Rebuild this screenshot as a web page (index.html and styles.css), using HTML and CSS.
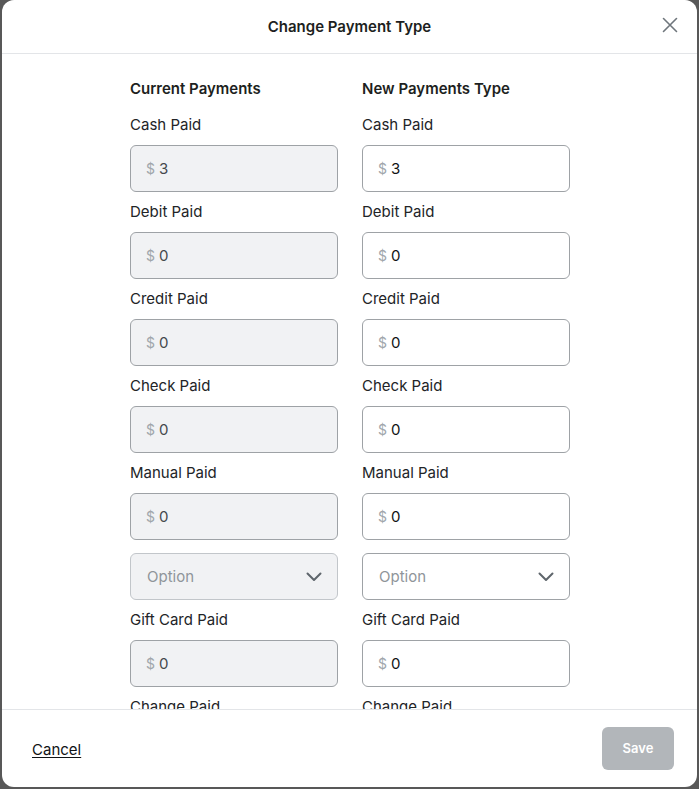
FILE: index.html
```html
<!DOCTYPE html>
<html lang="en">
<head>
<meta charset="utf-8">
<title>Change Payment Type</title>
<link rel="stylesheet" href="styles.css">
</head>
<body>
<div class="modal">
  <header class="modal-header">
    <h1 class="title">Change Payment Type</h1>
    <button class="close" aria-label="Close">
      <svg width="16" height="16" viewBox="0 0 16 16"><path d="M1.5 1.5 L14.5 14.5 M14.5 1.5 L1.5 14.5" stroke="#6f767c" stroke-width="1.6" stroke-linecap="round" fill="none"/></svg>
    </button>
  </header>
  <main class="modal-body">
    <div class="columns">
      <section class="col">
        <h2 class="col-title">Current Payments</h2>
        <div class="field"><div class="label">Cash Paid</div><div class="input disabled"><span class="cur">$</span><span class="val">3</span></div></div>
        <div class="field"><div class="label">Debit Paid</div><div class="input disabled"><span class="cur">$</span><span class="val">0</span></div></div>
        <div class="field"><div class="label">Credit Paid</div><div class="input disabled"><span class="cur">$</span><span class="val">0</span></div></div>
        <div class="field"><div class="label">Check Paid</div><div class="input disabled"><span class="cur">$</span><span class="val">0</span></div></div>
        <div class="field"><div class="label">Manual Paid</div><div class="input disabled"><span class="cur">$</span><span class="val">0</span></div></div>
        <div class="select disabled"><span class="placeholder">Option</span>
          <svg class="chev" width="16" height="10" viewBox="0 0 16 10"><path d="M1.5 1.5 L8 8 L14.5 1.5" stroke="#5f666c" stroke-width="2" fill="none" stroke-linecap="round" stroke-linejoin="round"/></svg></div>
        <div class="field"><div class="label">Gift Card Paid</div><div class="input disabled"><span class="cur">$</span><span class="val">0</span></div></div>
        <div class="field"><div class="label">Change Paid</div><div class="input disabled"><span class="cur">$</span><span class="val">0</span></div></div>
      </section>
      <section class="col">
        <h2 class="col-title">New Payments Type</h2>
        <div class="field"><div class="label">Cash Paid</div><div class="input"><span class="cur">$</span><span class="val">3</span></div></div>
        <div class="field"><div class="label">Debit Paid</div><div class="input"><span class="cur">$</span><span class="val">0</span></div></div>
        <div class="field"><div class="label">Credit Paid</div><div class="input"><span class="cur">$</span><span class="val">0</span></div></div>
        <div class="field"><div class="label">Check Paid</div><div class="input"><span class="cur">$</span><span class="val">0</span></div></div>
        <div class="field"><div class="label">Manual Paid</div><div class="input"><span class="cur">$</span><span class="val">0</span></div></div>
        <div class="select"><span class="placeholder">Option</span>
          <svg class="chev" width="16" height="10" viewBox="0 0 16 10"><path d="M1.5 1.5 L8 8 L14.5 1.5" stroke="#5f666c" stroke-width="2" fill="none" stroke-linecap="round" stroke-linejoin="round"/></svg></div>
        <div class="field"><div class="label">Gift Card Paid</div><div class="input"><span class="cur">$</span><span class="val">0</span></div></div>
        <div class="field"><div class="label">Change Paid</div><div class="input"><span class="cur">$</span><span class="val">0</span></div></div>
      </section>
    </div>
  </main>
  <footer class="modal-footer">
    <a class="cancel" href="#">Cancel</a>
    <button class="save" disabled>Save</button>
  </footer>
</div>
</body>
</html>
```
FILE: styles.css
```css
* { box-sizing: border-box; }
html, body { margin: 0; height: 100%; }
body {
  background: #585858;
  padding: 0 2px 2px 2px;
  font-family: Inter, "Noto Sans", "Liberation Sans", sans-serif;
  color: #1d1f21;
  overflow: hidden;
}
.modal {
  background: #fff;
  border-radius: 12px;
  height: 787px;
  display: flex;
  flex-direction: column;
  overflow: hidden;
}
.modal-header {
  height: 54px;
  flex: none;
  border-bottom: 1px solid #e3e5e8;
  display: flex;
  align-items: center;
  justify-content: center;
  position: relative;
}
.title {
  margin: 0;
  font-size: 15px;
  font-weight: 600;
  line-height: 20px;
  color: #1d1f21;
}
.close {
  position: absolute;
  right: 19px;
  top: 17px;
  width: 16px;
  height: 16px;
  padding: 0;
  border: 0;
  background: none;
  display: flex;
}
.modal-body {
  flex: 1;
  overflow: hidden;
  padding-top: 25px;
}
.columns {
  display: grid;
  grid-template-columns: 208px 208px;
  column-gap: 24px;
  justify-content: center;
  margin-left: 1px;
}
.col-title {
  margin: 0 0 16px;
  font-size: 15px;
  font-weight: 600;
  line-height: 20px;
}
.field { margin-bottom: 10px; }
.label {
  font-size: 15px;
  line-height: 20px;
  margin-bottom: 10px;
  color: #222427;
}
.input, .select {
  height: 47px;
  border: 1px solid #9ea2a6;
  border-radius: 6px;
  background: #fff;
  display: flex;
  align-items: center;
  padding: 0 15px;
  font-size: 15px;
}
.input.disabled, .select.disabled {
  background: #f1f2f4;
}
.select.disabled { border-color: #c2c6ca; }
.cur {
  color: #a0a6ab;
  font-size: 14px;
  margin-right: 4px;
}
.val { color: #111315; }
.disabled .val { color: #45494d; }
.select {
  margin-top: 13px;
  margin-bottom: 10px;
  justify-content: space-between;
  padding: 0 15px 0 16px;
}
.placeholder { color: #8f959a; }
.chev { display: block; }
.modal-footer {
  height: 78px;
  flex: none;
  border-top: 1px solid #e3e5e8;
  display: flex;
  align-items: center;
  justify-content: space-between;
  padding: 0 23px 1px 30px;
}
.cancel {
  color: #111315;
  font-size: 15px;
  text-decoration: underline;
  text-underline-offset: 2px;
  margin-top: 2px;
}
.save {
  width: 72px;
  height: 43px;
  border: 0;
  border-radius: 6px;
  background: #b2b6ba;
  color: #fff;
  font-family: Inter, "Noto Sans", sans-serif;
  font-size: 13px;
  font-weight: 600;
}
```
